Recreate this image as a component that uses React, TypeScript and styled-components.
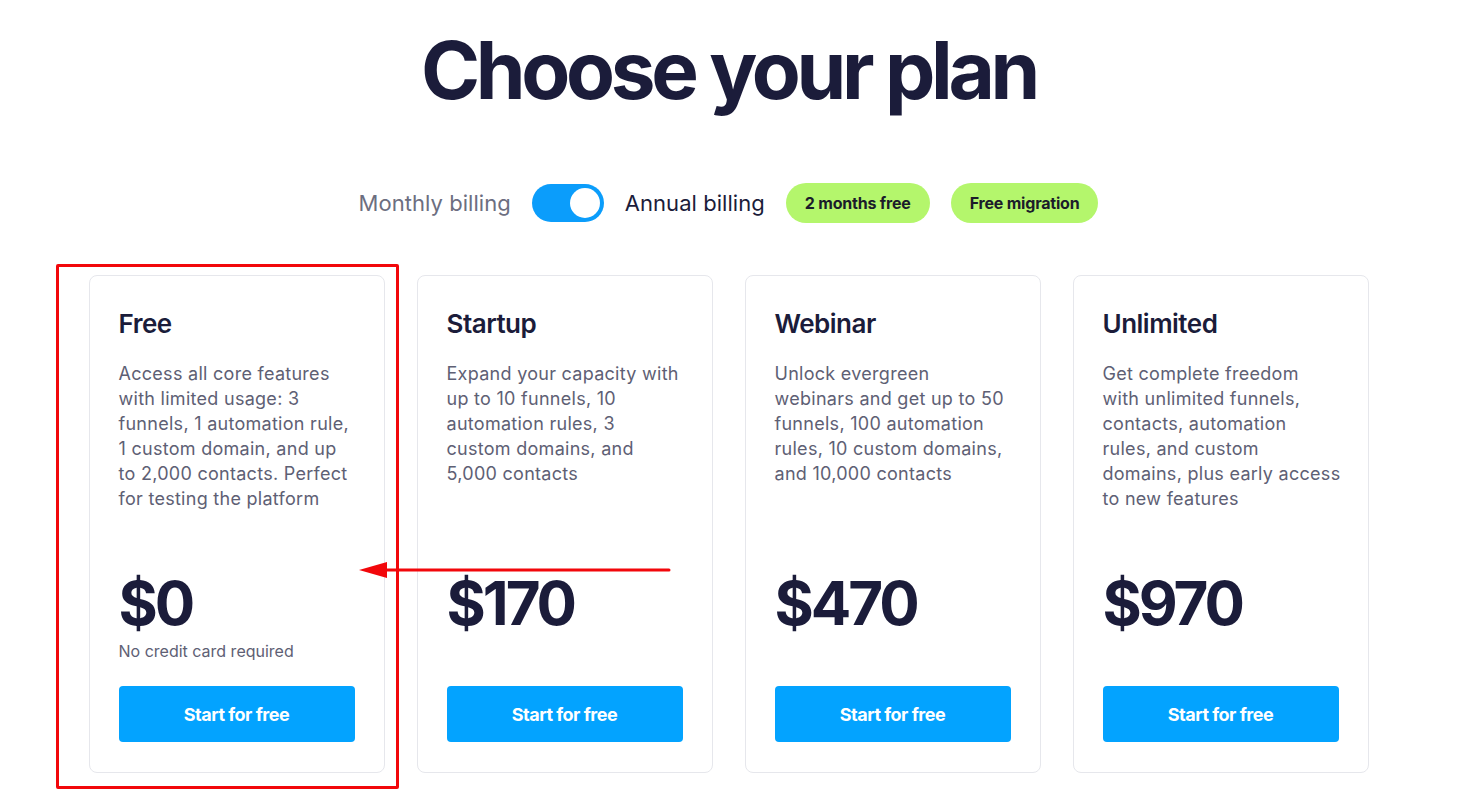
import React, {useState} from 'react';
import styled, {createGlobalStyle} from 'styled-components';

const GlobalStyle = createGlobalStyle`
  html, body {
    margin: 0;
    padding: 0;
    background: #ffffff;
  }
  body {
    font-family: "Inter", "Lato", sans-serif;
    color: #1b1c3a;
  }
`;

type Plan = {
    name: string;
    lines: string[];
    price: string;
    note?: string;
};

// description lines are kept as they wrap on the original page
const PLANS: Plan[] = [
    {
        name: 'Free',
        lines: [
            'Access all core features',
            'with limited usage: 3',
            'funnels, 1 automation rule,',
            '1 custom domain, and up',
            'to 2,000 contacts. Perfect',
            'for testing the platform',
        ],
        price: '$0',
        note: 'No credit card required',
    },
    {
        name: 'Startup',
        lines: [
            'Expand your capacity with',
            'up to 10 funnels, 10',
            'automation rules, 3',
            'custom domains, and',
            '5,000 contacts',
        ],
        price: '$170',
    },
    {
        name: 'Webinar',
        lines: [
            'Unlock evergreen',
            'webinars and get up to 50',
            'funnels, 100 automation',
            'rules, 10 custom domains,',
            'and 10,000 contacts',
        ],
        price: '$470',
    },
    {
        name: 'Unlimited',
        lines: [
            'Get complete freedom',
            'with unlimited funnels,',
            'contacts, automation',
            'rules, and custom',
            'domains, plus early access',
            'to new features',
        ],
        price: '$970',
    },
];

function App() {
    const [annual, setAnnual] = useState(true);

    return (
        <Page>
            <GlobalStyle/>
            <Title>Choose your plan</Title>

            <BillingRow>
                <BillingLabel active={!annual}>Monthly billing</BillingLabel>
                <Toggle on={annual} onClick={() => setAnnual(!annual)}>
                    <Knob/>
                </Toggle>
                <BillingLabel active={annual}>Annual billing</BillingLabel>
                <Pill>2 months free</Pill>
                <Pill>Free migration</Pill>
            </BillingRow>

            <Cards>
                {PLANS.map((plan, key) => (
                    <Card key={key}>
                        <PlanName>{plan.name}</PlanName>
                        <Description>
                            {plan.lines.map((line, i) => <Line key={i}>{line}</Line>)}
                        </Description>
                        <Price>{plan.price}</Price>
                        <Note>{plan.note || '\u00a0'}</Note>
                        <StartButton>Start for free</StartButton>
                    </Card>
                ))}

                <Highlight/>
                <Arrow width="312" height="20" viewBox="0 0 312 20">
                    <line x1="24" y1="10" x2="310" y2="10" stroke="#f2070b" strokeWidth="3" strokeLinecap="round"/>
                    <polygon points="0,10 28,2 28,18" fill="#f2070b"/>
                </Arrow>
            </Cards>
        </Page>
    );
}

const Page = styled.div`
  display: flex;
  flex-direction: column;
  align-items: center;
  padding-top: 22px;
  min-height: 795px;
  box-sizing: border-box;
`;

const Title = styled.h1`
  margin: 0;
  font-size: 80px;
  font-weight: 700;
  letter-spacing: -4.3px;
  line-height: 96px;
  color: #1b1c3a;
`;

const BillingRow = styled.div`
  display: flex;
  align-items: center;
  margin-top: 65px;
  gap: 21px;
`;

const BillingLabel = styled.span<{active: boolean}>`
  font-size: 22px;
  color: ${p => p.active ? '#1b1c3a' : '#6c6e80'};
  letter-spacing: 0.05px;
`;

const Toggle = styled.button<{on: boolean}>`
  width: 72px;
  height: 38px;
  border-radius: 19px;
  border: none;
  padding: 4px;
  background: ${p => p.on ? '#0b9dfb' : '#cfd2dc'};
  display: flex;
  justify-content: ${p => p.on ? 'flex-end' : 'flex-start'};
  align-items: center;
  cursor: pointer;
`;

const Knob = styled.span`
  width: 30px;
  height: 30px;
  border-radius: 50%;
  background: #ffffff;
`;

const Pill = styled.span`
  background: #b4f66c;
  color: #1b1c2a;
  font-size: 16px;
  font-weight: 700;
  letter-spacing: -0.2px;
  height: 40px;
  padding: 0 19px;
  border-radius: 20px;
  display: flex;
  align-items: center;
`;

const Cards = styled.div`
  position: relative;
  display: grid;
  grid-template-columns: repeat(4, 296px);
  gap: 32px;
  margin-top: 52px;
`;

const Card = styled.div`
  border: 1px solid #e6e7ec;
  border-radius: 8px;
  padding: 30px 29px 30px 29px;
  display: flex;
  flex-direction: column;
  height: 498px;
  box-sizing: border-box;
`;

const PlanName = styled.h2`
  margin: 0;
  font-size: 26px;
  font-weight: 600;
  line-height: 36px;
  letter-spacing: -0.5px;
  color: #1b1c3a;
`;

const Description = styled.p`
  margin: 19px 0 0;
  font-size: 18px;
  line-height: 25px;
  color: #5e6074;
  letter-spacing: 0.28px;
  flex: 1;
`;

const Line = styled.span`
  display: block;
  white-space: nowrap;
`;

const Price = styled.div`
  font-size: 60px;
  font-weight: 700;
  letter-spacing: -3px;
  line-height: 70px;
  color: #1b1c3a;
`;

const Note = styled.div`
  font-size: 16px;
  line-height: 22px;
  color: #5e6074;
  margin-top: 2px;
`;

const StartButton = styled.button`
  margin-top: 24px;
  height: 56px;
  border: none;
  border-radius: 4px;
  background: #03a3ff;
  color: #ffffff;
  font-family: inherit;
  font-size: 18px;
  font-weight: 700;
  letter-spacing: -0.5px;
  cursor: pointer;
`;

const Highlight = styled.div`
  position: absolute;
  left: -33px;
  top: -11px;
  width: 343px;
  height: 525px;
  border: 3px solid #f2070b;
  border-radius: 2px;
  box-sizing: border-box;
  pointer-events: none;
`;

const Arrow = styled.svg`
  position: absolute;
  left: 270px;
  top: 285px;
  pointer-events: none;
`;

export default App;
